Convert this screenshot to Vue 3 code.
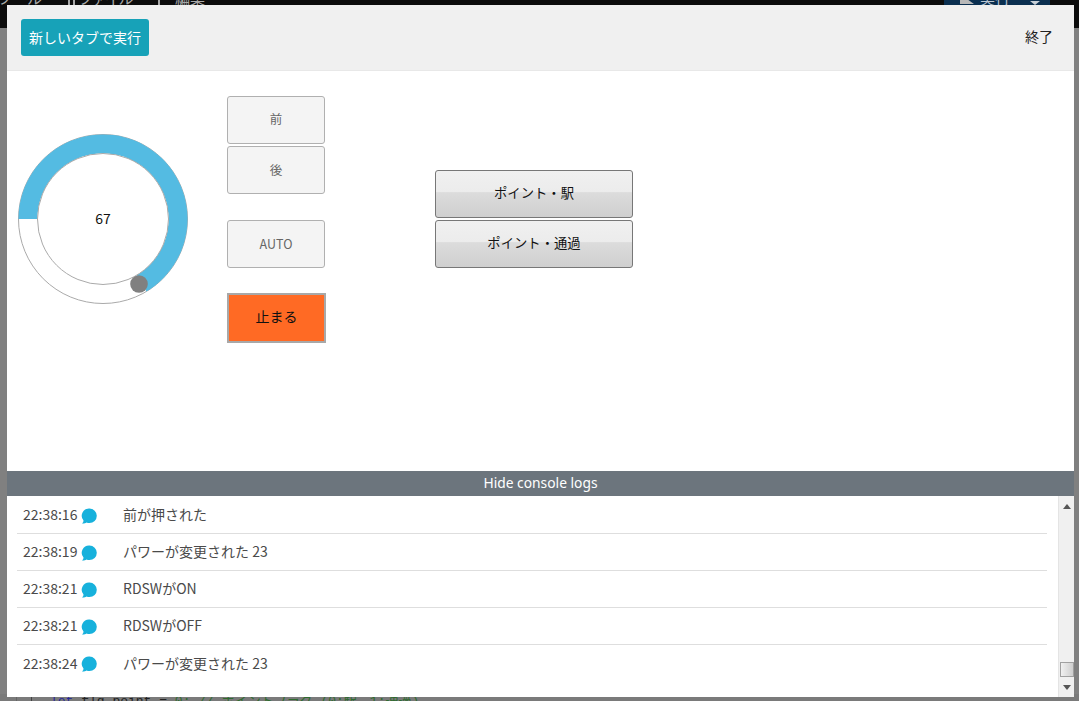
<script setup>
const logs = [
  { time: '22:38:16', text: '前が押された' },
  { time: '22:38:19', text: 'パワーが変更された 23' },
  { time: '22:38:21', text: 'RDSWがON' },
  { time: '22:38:21', text: 'RDSWがOFF' },
  { time: '22:38:24', text: 'パワーが変更された 23' },
]
</script>

<template>
  <div class="page">
    <div class="appbar">
      <span class="menu menu-a">ツール</span>
      <i class="tick tick-a"></i>
      <span class="menu menu-b">ファイル</span>
      <i class="tick tick-b"></i>
      <span class="menu menu-c">編集</span>
      <div class="run">
        <i class="play"></i>
        <span class="run-label">実行</span>
        <i class="caret"></i>
      </div>
    </div>
    <div class="code-line">
      <i class="gutter"></i>
      <span class="code"><span class="kw">let</span> flg_point = <span class="cm">0; // ポイントフラグ (0:駅　1:通過)</span></span>
    </div>

    <div class="modal">
      <header class="head">
        <button class="run-tab">新しいタブで実行</button>
        <span class="quit">終了</span>
      </header>

      <main class="body">
        <div class="knob-col">
          <svg class="knob" width="172" height="172" viewBox="0 0 172 172">
            <circle cx="86" cy="85" r="84.5" fill="#fff" stroke="#aaa" stroke-width="1" />
            <path d="M1.500 85 A84.500 84.500 0 1 1 129.500 157.400 L119.700 141.100 A65.500 65.500 0 1 0 20.500 85 Z" fill="#54bbe2" />
            <circle cx="86" cy="85" r="65.500" fill="#fff" stroke="#aaa" stroke-width="1" />
            <circle cx="122" cy="150" r="8.800" fill="#808080" />
          </svg>
          <span class="knob-value">67</span>
        </div>

        <div class="drive-col">
          <button class="soft first">前</button>
          <button class="soft">後</button>
          <button class="soft auto">AUTO</button>
          <button class="stop">止まる</button>
        </div>

        <div class="point-col">
          <button class="point">ポイント・駅</button>
          <button class="point">ポイント・通過</button>
        </div>
      </main>

      <div class="log-title">Hide console logs</div>

      <section class="log-wrap">
        <ul class="log-list">
          <li v-for="(log, i) in logs" :key="i" class="log-row">
            <span class="time">{{ log.time }}</span>
            <svg class="bubble" width="16" height="16" viewBox="0 0 16 16">
              <path d="M8.500.5a7.300 7.300 0 0 1 0 14.600c-1.100 0-2.100-.2-3-.6-1.100.8-2.800 1.200-4.500 1 1-.8 1.500-1.800 1.500-3A7.300 7.300 0 0 1 8.500.5Z" fill="#17b1dc" />
            </svg>
            <span class="msg">{{ log.text }}</span>
          </li>
        </ul>
        <div class="scrollbar">
          <svg class="arrow" width="8" height="5" viewBox="0 0 8 5"><path d="M4 0 8 5H0Z" fill="#555" /></svg>
          <div class="thumb"></div>
          <svg class="arrow" width="8" height="5" viewBox="0 0 8 5"><path d="M0 0H8L4 5Z" fill="#555" /></svg>
        </div>
      </section>
    </div>
  </div>
</template>

<style>
html, body { margin: 0; }
</style>

<style scoped>
.page {
  position: relative;
  width: 1079px;
  height: 701px;
  overflow: hidden;
  background: #808080;
  font-family: "Noto Sans CJK JP", "Noto Sans", sans-serif;
  display: flex;
  flex-direction: column;
  justify-content: space-between;
}
.appbar {
  height: 28px;
  background: #0c0c0c;
  color: #a8a8a8;
  font-size: 15px;
  line-height: 20px;
  position: relative;
}
.menu { position: absolute; top: -12px; }
.menu-a { left: -3px; }
.menu-b { left: 78px; letter-spacing: -1.500px; }
.menu-c { left: 175px; }
.tick { position: absolute; top: 0; width: 7px; height: 5px; border-left: 2px solid #a8a8a8; border-right: 2px solid #a8a8a8; box-sizing: border-box; }
.tick-a { left: 68px; }
.tick-b { left: 158px; width: 8px; border-right: 0; }
.run {
  position: absolute;
  left: 944px;
  top: 0;
  width: 106px;
  height: 5px;
  background: #0b2f50;
  overflow: hidden;
}
.run-label { position: absolute; left: 36px; top: -12px; color: #b9c4d0; }
.play { position: absolute; left: 16px; top: 0; width: 14px; height: 4px; background: #b8b8b8; clip-path: polygon(0 0, 60% 0, 100% 100%, 0 100%); }
.caret { position: absolute; left: 86px; top: 1px; width: 10px; height: 4px; background: #c8d0d8; clip-path: polygon(0 0, 100% 0, 50% 100%); }
.code-line {
  position: relative;
  height: 16px;
  margin-bottom: -9px;
  background: #7a7a7a;
}
.gutter {
  position: absolute;
  left: 16px;
  top: 0;
  bottom: 0;
  width: 16px;
  box-sizing: border-box;
  border-left: 1px solid #666;
  border-right: 1px solid #444;
}
.code {
  position: absolute;
  left: 50px;
  top: 0;
  white-space: pre;
  font-family: "Liberation Mono", "Noto Sans CJK JP", monospace;
  font-size: 13px;
  line-height: 16px;
  color: #222;
}
.kw { color: #2a2a9a; }
.cm { color: #2f6b2f; }

.modal {
  position: absolute;
  left: 7px;
  top: 5px;
  width: 1067px;
  height: 692px;
  background: #fff;
  display: flex;
  flex-direction: column;
}
.head {
  height: 66px;
  flex: none;
  box-sizing: border-box;
  background: #f0f0f0;
  border-bottom: 1px solid #e8e8e8;
  display: flex;
  align-items: center;
  justify-content: space-between;
  padding: 0 21px 1px 14px;
}
.run-tab {
  width: 128px;
  height: 37px;
  border: 0;
  border-radius: 3px;
  background: #17a2b8;
  color: #fff;
  font: 14px/1 "Noto Sans CJK JP", sans-serif;
  padding: 0;
}
.quit { font-size: 14px; color: #222; margin-bottom: 2px; }

.body {
  height: 400px;
  flex: none;
  display: flex;
  align-items: flex-start;
}
.knob-col {
  position: relative;
  margin: 63px 0 0 10px;
  width: 172px;
  height: 172px;
}
.knob { display: block; }
.knob-value {
  position: absolute;
  left: 0;
  right: 0;
  top: 74px;
  text-align: center;
  font-size: 14px;
  line-height: 20px;
  color: #111;
}
.drive-col {
  margin: 25px 0 0 38px;
  width: 100px;
  display: flex;
  flex-direction: column;
  align-items: flex-start;
}
.soft {
  width: 98px;
  height: 48px;
  box-sizing: border-box;
  border: 1px solid #b0b0b0;
  border-radius: 3px;
  background: #f4f4f4;
  color: #666;
  font: 12.500px/1 "Noto Sans CJK JP", sans-serif;
  padding: 0;
}
.soft.first { padding-bottom: 1px; }
.soft + .soft { margin-top: 2px; }
.soft.auto { margin-top: 26px; }
.stop {
  margin-top: 25px;
  width: 99px;
  height: 50px;
  box-sizing: border-box;
  border: 2px solid #a8a8a8;
  background: #ff6a24;
  color: #111;
  font: 14px/1 "Noto Sans CJK JP", sans-serif;
  padding: 0 0 5px;
}
.point-col {
  margin: 99px 0 0 108px;
  display: flex;
  flex-direction: column;
  gap: 2px;
}
.point {
  width: 198px;
  height: 48px;
  box-sizing: border-box;
  border: 1px solid #777;
  border-radius: 3px;
  background: linear-gradient(#f0f0f0 0, #ececec 45%, #dcdcdc 47%, #cfcfcf 100%);
  color: #111;
  font: 13.333px/1 "Noto Sans CJK JP", sans-serif;
  padding: 0 0 3px;
}

.log-title {
  height: 25px;
  flex: none;
  background: #6c757d;
  color: #fff;
  text-align: center;
  font: 13.800px/24px "Noto Sans", sans-serif;
}
.log-wrap {
  flex: 1;
  min-height: 0;
  display: flex;
  background: #fff;
}
.log-list {
  flex: 1;
  list-style: none;
  margin: 0 11px 0 10px;
  padding: 1px 0 0;
}
.log-row {
  height: 37px;
  box-sizing: border-box;
  border-bottom: 1px solid #dedede;
  display: flex;
  align-items: center;
  padding: 0 0 2px 6px;
  color: #4a4a4a;
  font-size: 14px;
}
.log-row:last-child { border-bottom: 0; }
.time { width: 58px; flex: none; }
.bubble { flex: none; margin-top: 3px; }
.msg { margin-left: 26px; }
.scrollbar {
  width: 16px;
  flex: none;
  background: #f0f0f0;
  border-left: 1px solid #e4e4e4;
  box-sizing: border-box;
  display: flex;
  flex-direction: column;
  align-items: center;
  padding: 8px 0 7px;
}
.arrow { flex: none; }
.thumb {
  width: 14px;
  height: 15px;
  margin-top: auto;
  margin-bottom: 8px;
  box-sizing: border-box;
  border: 1px solid #a0a0a0;
  background: linear-gradient(90deg, #f0f0f0, #cfcfcf);
}
</style>
